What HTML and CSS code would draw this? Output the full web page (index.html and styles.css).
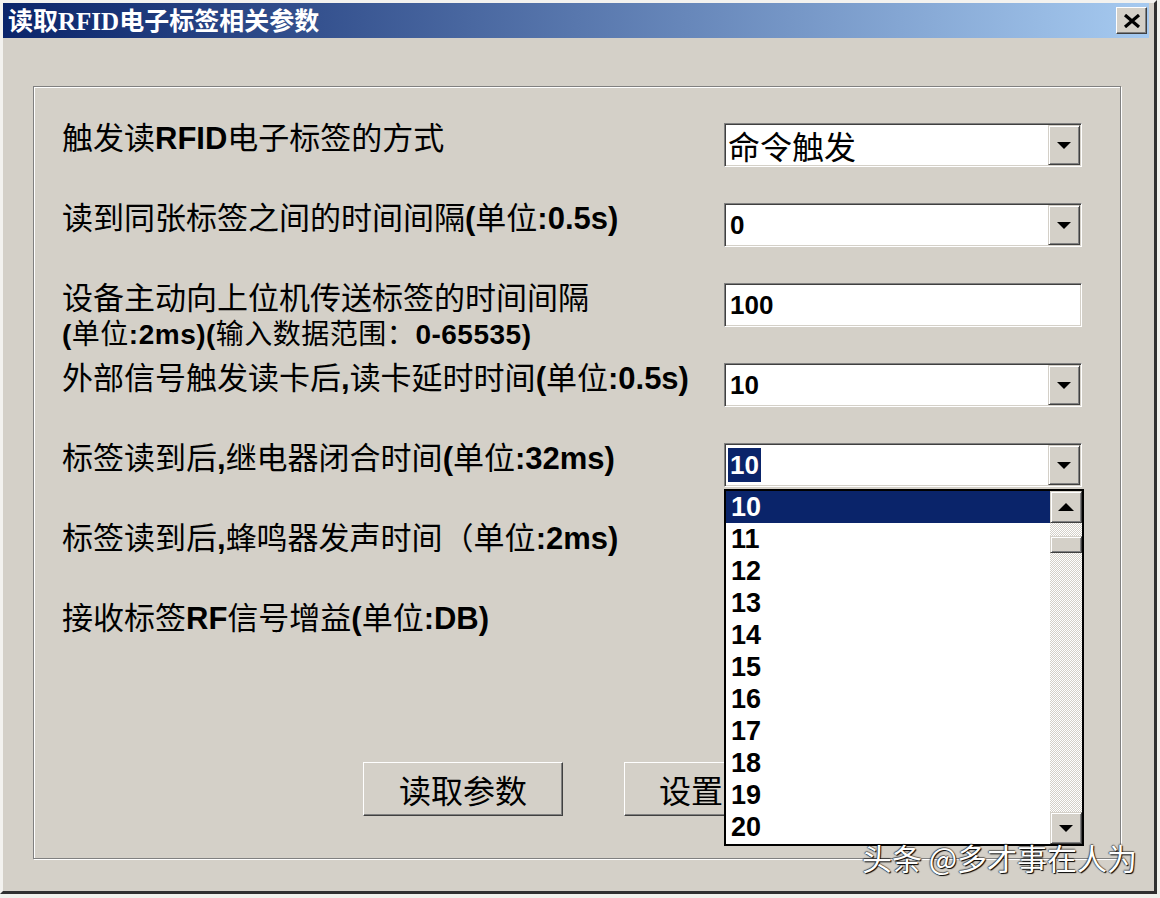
FILE: index.html
```html
<!DOCTYPE html>
<html lang="zh-CN">
<head>
    <meta charset="UTF-8">
    <title>读取RFID电子标签相关参数</title>
    <link rel="stylesheet" href="styles.css">
</head>
<body>

<div class="window">
    <div class="titlebar">
        <span class="title">读取<span class="title-lat">RFID</span>电子标签相关参数</span>
        <button class="close-btn">
            <svg width="18" height="14" viewBox="0 0 18 14">
                <path d="M2 1 L16 13 M16 1 L2 13" stroke="#000" stroke-width="3.2" fill="none"/>
            </svg>
        </button>
    </div>

    <div class="client">
        <div class="group">
            <div class="form">
                <div class="label">触发读<b>RFID</b>电子标签的方式</div>
                <div class="combo">
                    <span class="value cjk">命令触发</span>
                    <span class="arrow-btn"><i class="tri-down"></i></span>
                </div>

                <div class="label">读到同张标签之间的时间间隔<b>(</b>单位<b>:0.5s)</b></div>
                <div class="combo">
                    <span class="value">0</span>
                    <span class="arrow-btn"><i class="tri-down"></i></span>
                </div>

                <div class="label">设备主动向上位机传送标签的时间间隔
                    <span class="sub"><b>(</b>单位<b>:2ms)(</b>输入数据范围：<b>0-65535)</b></span>
                </div>
                <div class="combo edit">
                    <span class="value">100</span>
                </div>

                <div class="label">外部信号触发读卡后<b>,</b>读卡延时时间<b>(</b>单位<b>:0.5s)</b></div>
                <div class="combo">
                    <span class="value">10</span>
                    <span class="arrow-btn"><i class="tri-down"></i></span>
                </div>

                <div class="label">标签读到后<b>,</b>继电器闭合时间<b>(</b>单位<b>:32ms)</b></div>
                <div class="combo">
                    <span class="value"><span class="sel">10</span></span>
                    <span class="arrow-btn"><i class="tri-down"></i></span>

                    <div class="droplist">
                        <div class="items">
                            <div class="item active">10</div>
                            <div class="item">11</div>
                            <div class="item">12</div>
                            <div class="item">13</div>
                            <div class="item">14</div>
                            <div class="item">15</div>
                            <div class="item">16</div>
                            <div class="item">17</div>
                            <div class="item">18</div>
                            <div class="item">19</div>
                            <div class="item">20</div>
                        </div>
                        <div class="scrollbar">
                            <span class="sb-btn"><i class="tri-up"></i></span>
                            <span class="thumb"></span>
                            <span class="track"></span>
                            <span class="sb-btn"><i class="tri-down"></i></span>
                        </div>
                    </div>
                </div>

                <div class="label">标签读到后<b>,</b>蜂鸣器发声时间（单位<b>:2ms)</b></div>
                <div class="combo">
                    <span class="value"></span>
                    <span class="arrow-btn"><i class="tri-down"></i></span>
                </div>

                <div class="label">接收标签<b>RF</b>信号增益<b>(</b>单位<b>:DB)</b></div>
                <div class="combo">
                    <span class="value"></span>
                    <span class="arrow-btn"><i class="tri-down"></i></span>
                </div>
            </div>

            <div class="actions">
                <button class="btn">读取参数</button>
                <button class="btn btn-set">设置</button>
            </div>
        </div>
    </div>

    <div class="watermark">头条 @多才事在人为</div>
</div>

</body>
</html>
```

FILE: styles.css
```css
body {
    margin: 0;
    background-color: #f1f2ed;
    font-family: "Noto Sans CJK SC", sans-serif;
    color: #000;
}

.window {
    position: relative;
    width: 1157px;
    height: 894px;
    box-sizing: border-box;
    border: 3px solid;
    border-color: #f3f2ef #303030 #303030 #f3f2ef;
    padding-right: 5px;
    background-color: #d4d0c8;
}

/* title bar */
.titlebar {
    height: 35px;
    display: flex;
    align-items: center;
    justify-content: space-between;
    padding: 0 2px 0 5px;
    background: linear-gradient(to right, #0a246a, #a6caf0);
}

.title {
    color: white;
    font-weight: bold;
    font-size: 25px;
    line-height: 35px;
    white-space: nowrap;
}

.title-lat {
    font-family: "Liberation Serif", serif;
    font-weight: bold;
}

.close-btn {
    width: 31px;
    height: 27px;
    padding: 0;
    display: flex;
    align-items: center;
    justify-content: center;
    background-color: #d4d0c8;
    border: 1px solid;
    border-color: #fff #404040 #404040 #fff;
    box-shadow: inset -1px -1px #808080;
}

/* client area */
.client {
    padding: 48px 28px 0 30px;
}

.group {
    height: 773px;
    box-sizing: border-box;
    border: 1px solid #808080;
    box-shadow: inset 1px 1px #fff, 1px 1px #fff;
    padding: 36px 38px 0 28px;
}

.form {
    display: grid;
    grid-template-columns: 1fr 358px;
    grid-auto-rows: 80px;
}

.label {
    font-family: "Liberation Sans", "Noto Sans CJK SC", sans-serif;
    font-size: 31px;
    line-height: 32px;
    white-space: nowrap;
    align-self: start;
}

.label b {
    font-weight: bold;
}

.label .sub {
    display: block;
    font-size: 28px;
    line-height: 28px;
    margin-top: 6px;
    letter-spacing: 0.5px;
}

/* combo boxes */
.combo {
    position: relative;
    height: 44px;
    box-sizing: border-box;
    display: flex;
    align-items: center;
    padding: 1px;
    background-color: white;
    border: 1px solid;
    border-color: #808080 #fff #fff #808080;
    box-shadow: inset 1px 1px #404040, inset -1px -1px #d4d0c8;
    align-self: start;
}

.value {
    flex: 1;
    padding-left: 4px;
    font-family: "Liberation Sans", sans-serif;
    font-weight: bold;
    font-size: 26px;
}

.value.cjk {
    font-family: "Noto Sans CJK SC", sans-serif;
    font-weight: normal;
    font-size: 32px;
    padding-left: 2px;
}

.sel {
    display: inline-block;
    background-color: #0a246a;
    color: white;
    line-height: 34px;
    padding: 0 2px;
    margin-left: -2px;
}

.arrow-btn,
.sb-btn,
.thumb {
    box-sizing: border-box;
    display: flex;
    align-items: center;
    justify-content: center;
    background-color: #d4d0c8;
    border: 1px solid;
    border-color: #d4d0c8 #404040 #404040 #d4d0c8;
    box-shadow: inset 1px 1px #fff, inset -1px -1px #808080;
}

.arrow-btn {
    width: 32px;
    height: 40px;
}

.tri-down {
    width: 0;
    height: 0;
    border-left: 7px solid transparent;
    border-right: 7px solid transparent;
    border-top: 7px solid #000;
}

.tri-up {
    width: 0;
    height: 0;
    border-left: 8px solid transparent;
    border-right: 8px solid transparent;
    border-bottom: 8px solid #000;
}

/* open dropdown list */
.droplist {
    position: absolute;
    left: -1px;
    top: 45px;
    z-index: 2;
    width: 360px;
    height: 357px;
    box-sizing: border-box;
    display: flex;
    border: 2px solid #000;
    background-color: white;
}

.items {
    flex: 1;
}

.item {
    height: 32px;
    line-height: 32px;
    padding-left: 5px;
    font-family: "Liberation Sans", sans-serif;
    font-weight: bold;
    font-size: 27px;
}

.item.active {
    background-color: #0a246a;
    color: white;
}

.scrollbar {
    width: 32px;
    display: flex;
    flex-direction: column;
    background: repeating-conic-gradient(#fff 0 25%, #d4d0c8 0 50%) 0 0 / 2px 2px;
}

.sb-btn {
    height: 32px;
}

.thumb {
    height: 17px;
    margin-top: 13px;
}

.track {
    flex: 1;
}

/* buttons */
.actions {
    display: flex;
    gap: 61px;
    margin-top: 79px;
    padding-left: 301px;
}

.btn {
    width: 200px;
    height: 54px;
    font-family: "Noto Sans CJK SC", sans-serif;
    font-size: 32px;
    color: #000;
    background-color: #d4d0c8;
    border: 1px solid;
    border-color: #fff #404040 #404040 #fff;
    box-shadow: inset -1px -1px #808080;
}

/* the rest of this caption is covered by the open list */
.btn-set {
    text-align: left;
    padding-left: 34px;
}

.watermark {
    position: absolute;
    left: 859px;
    top: 836px;
    z-index: 3;
    font-size: 30px;
    line-height: 36px;
    color: white;
    white-space: nowrap;
    text-shadow: 1px 1px 1px #000, -1px 0 1px rgba(0, 0, 0, 0.5), 0 -1px 1px rgba(0, 0, 0, 0.5);
}
```
